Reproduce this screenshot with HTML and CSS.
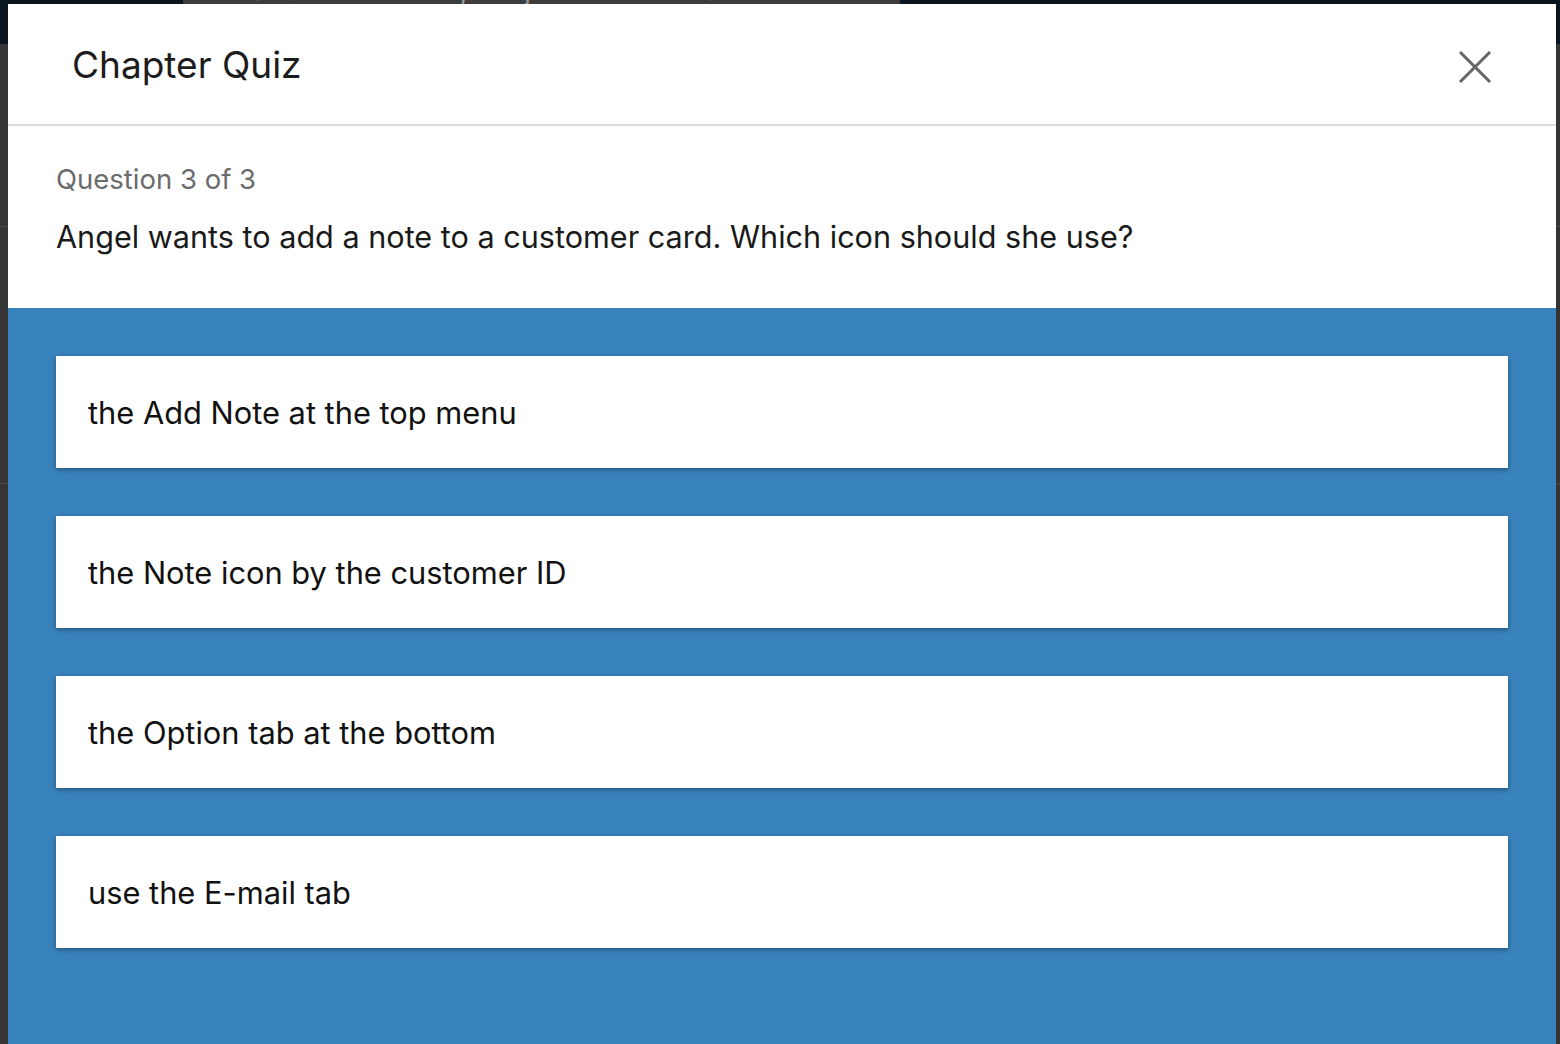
FILE: index.html
```html
<!DOCTYPE html>
<html lang="en">
<head>
<meta charset="utf-8">
<title>Chapter Quiz</title>
<link rel="stylesheet" href="styles.css">
</head>
<body>
<div class="page">
  <div class="topbar">
    <div class="brand"></div>
    <div class="search"><span class="search-icon"></span>Search for skills, subjects or software</div>
  </div>
  <div class="page-body">
    <div class="side-line one"></div>
    <div class="side-line two"></div>
  </div>
</div>
<div class="overlay">
  <div class="modal">
    <div class="modal-header">
      <h1 class="modal-title">Chapter Quiz</h1>
      <button class="close" aria-label="Close">
        <svg width="34" height="32" viewBox="0 0 34 32"><path d="M2 1 L32 31 M32 1 L2 31" stroke="#666" stroke-width="3" fill="none"/></svg>
      </button>
    </div>
    <div class="question">
      <div class="q-count">Question 3 of 3</div>
      <div class="q-text">Angel wants to add a note to a customer card. Which icon should she use?</div>
    </div>
    <div class="answers">
      <div class="answer">the Add Note at the top menu</div>
      <div class="answer">the Note icon by the customer ID</div>
      <div class="answer">the Option tab at the bottom</div>
      <div class="answer">use the E-mail tab</div>
    </div>
  </div>
</div>
</body>
</html>
```
FILE: styles.css
```css
html, body {
  margin: 0;
  padding: 0;
  height: 100%;
  overflow: hidden;
}
body {
  background: #353535;
  font-family: Inter, "Noto Sans", "Liberation Sans", sans-serif;
}
.page {
  height: 100%;
}
.topbar {
  height: 44px;
  background: #0b1520;
  display: flex;
}
.brand {
  width: 183px;
}
.search {
  width: 717px;
  height: 44px;
  background: #3c3c3c;
  color: #999;
  font-size: 28px;
  line-height: 1;
  display: flex;
  align-items: flex-end;
  padding-left: 66px;
  box-sizing: border-box;
  margin-top: -20px;
  padding-bottom: 20px;
}
.side-line {
  height: 1px;
  background: #4a4a4a;
  position: absolute;
  left: 0;
  right: 0;
}
.side-line.one { top: 226px; }
.side-line.two { top: 483px; }
.overlay {
  position: fixed;
  inset: 0;
}
.modal {
  position: absolute;
  left: 8px;
  top: 4px;
  width: 1548px;
  bottom: -40px;
  background: #ffffff;
  display: flex;
  flex-direction: column;
}
.modal-header {
  height: 122px;
  border-bottom: 2px solid #dcdcdc;
  box-sizing: border-box;
  display: flex;
  align-items: center;
  justify-content: space-between;
  padding: 0 64px 0 64px;
}
.modal-title {
  margin: 0;
  font-size: 37px;
  font-weight: 400;
  color: #1c1c1c;
  letter-spacing: 0;
}
.close {
  background: none;
  border: 0;
  padding: 0;
  width: 34px;
  height: 32px;
  margin-top: 6px;
}
.close svg { display: block; }
.question {
  padding: 34px 48px 0;
  height: 182px;
  box-sizing: border-box;
}
.q-count {
  font-size: 27.5px;
  color: #6b6b6b;
  line-height: 38px;
}
.q-text {
  margin-top: 18px;
  font-size: 30.6px;
  color: #1a1a1a;
  line-height: 42px;
}
.answers {
  flex: 1;
  background: #3983bd;
  padding: 48px 48px;
  display: flex;
  flex-direction: column;
  gap: 48px;
}
.answer {
  background: #ffffff;
  height: 112px;
  box-sizing: border-box;
  display: flex;
  align-items: center;
  padding-left: 32px;
  font-size: 30.8px;
  color: #111;
  box-shadow: 0 2px 4px rgba(0, 0, 0, 0.3), 0 0 10px rgba(0, 0, 0, 0.08);
}
```
